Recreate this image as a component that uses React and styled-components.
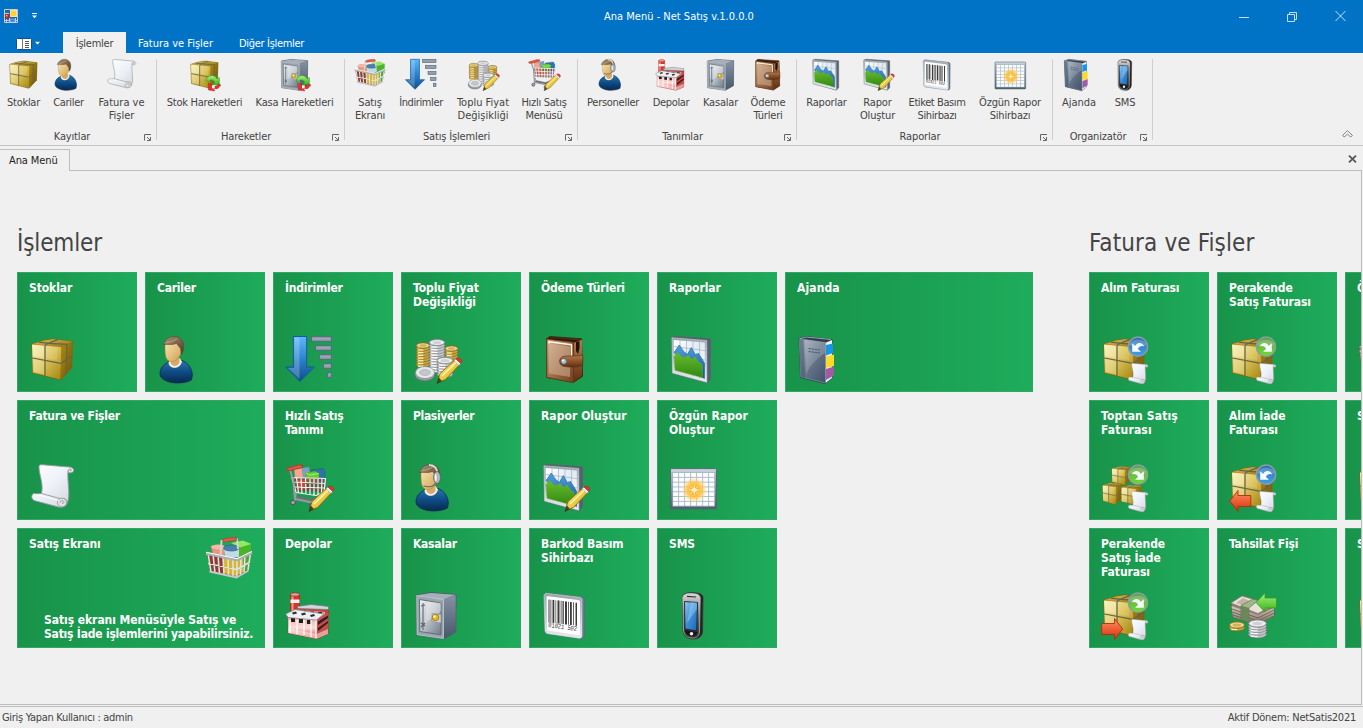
import React from 'react';
import styled, { createGlobalStyle, css } from 'styled-components';

const GlobalStyle = createGlobalStyle`
  * { box-sizing: border-box; }
  html, body { margin: 0; padding: 0; overflow: hidden; background: #f0f0f0; }
  body {
    font-family: Tahoma, "DejaVu Sans Condensed", "DejaVu Sans", sans-serif;
    font-stretch: condensed;
    font-size: 11px;
    color: #444;
  }
`;

/* ---------- gradients shared by the icons ---------- */

const Hidden = styled.svg`
  position: absolute;
  width: 0;
  height: 0;
`;

const Lin = ({ id, from, to, mid, v }) => (
  <linearGradient id={id} x1="0" y1="0" x2={v ? 0 : 1} y2="1">
    <stop offset="0" stopColor={from} />
    {mid && <stop offset=".5" stopColor={mid} />}
    <stop offset="1" stopColor={to} />
  </linearGradient>
);

const Defs = () => (
  <Hidden aria-hidden="true">
    <defs>
      <Lin id="boxFront" from="#f6edb4" mid="#d6be55" to="#a3850f" />
      <Lin id="boxSide" from="#b08d16" to="#6d5203" />
      <Lin id="boxTop" from="#dcc65c" to="#8d6c08" />
      <Lin id="skin" from="#fbe6b4" to="#cf9e4d" />
      <Lin id="hair" from="#a99579" mid="#80664a" to="#4d3822" />
      <Lin id="shirt" from="#2d75ae" mid="#0f4c84" to="#06294f" v />
      <Lin id="paper" from="#ffffff" mid="#edf1f7" to="#cdd0d6" />
      <Lin id="blueArrow" from="#5cb8fb" mid="#2b83ce" to="#0d4d8c" v />
      <Lin id="leather" from="#d5b292" mid="#a06f4b" to="#71401f" />
      <Lin id="strap" from="#b97a4c" to="#602f10" v />
      <Lin id="frame" from="#9aa4ae" to="#e8ebee" v />
      <Lin id="plot" from="#ffffff" mid="#e1eaf1" to="#ffffff" />
      <Lin id="green" from="#69bd2c" to="#2f8714" v />
      <Lin id="blue" from="#4ea3e6" to="#174f8f" v />
      <Lin id="steel" from="#f1f3f5" mid="#b9c0c8" to="#707a86" />
      <Lin id="steelSide" from="#8693a3" to="#49576a" v />
      <Lin id="slate" from="#a7b3c2" mid="#66768a" to="#40516a" />
      <Lin id="redBrick" from="#f8a6a0" mid="#fbdcd8" to="#d94b45" v />
      <Lin id="phoneBody" from="#d8d8d8" mid="#6f6f6f" to="#2b2b2b" v />
      <Lin id="screen" from="#93cbf5" mid="#3c8ed7" to="#1963b2" />
      <Lin id="redArrow" from="#ff9064" to="#d92f09" v />
      <Lin id="limeArrow" from="#aaf07c" to="#37b31c" v />
      <Lin id="badgeGreen" from="#5b9d4b" to="#6fe02d" v />
      <Lin id="badgeBlue" from="#2d6eb0" to="#3fa0ee" v />
      <Lin id="pencil" from="#fff08a" to="#d8a80e" />
      <Lin id="cash" from="#d3c8bc" to="#7c6c5d" v />
      <Lin id="gridFrame" from="#b8c6ce" to="#49606a" v />
      <radialGradient id="sun">
        <stop offset="0" stopColor="#fff6c2" />
        <stop offset=".2" stopColor="#ffb02a" />
        <stop offset=".6" stopColor="#ffc548" stopOpacity=".85" />
        <stop offset="1" stopColor="#ffe89a" stopOpacity="0" />
      </radialGradient>
    </defs>
  </Hidden>
);

/* ---------- icon parts, drawn on a 48 unit square ---------- */

const Box = () => (
  <g strokeLinejoin="round">
    <path d="M2.7 8 15 4.4 24 3 43.6 5.5 42.7 32 31.5 44 3.7 36.8Z" fill="#8a6c0c" stroke="#7d6414" strokeWidth=".8" />
    <path d="M2.9 8.2 15 4.5 24 3.2 43.4 5.6 32.5 11Z" fill="url(#boxTop)" />
    <path d="M3 8.4 32.5 11 31.4 43.6 3.9 36.5Z" fill="url(#boxFront)" />
    <path d="M32.5 11 43.4 5.8 42.5 31.8 31.4 43.6Z" fill="url(#boxSide)" />
    <path d="M3.5 9 15 10v12L4 20.5Z" fill="#fff9d0" opacity=".45" />
    <path d="M4.500 22.500 15 24.500V38L5 35.500Z" fill="#fff9d0" opacity=".25" />
    <path d="M17 10.500 29 11.500 28 24.500 17 22.500Z" fill="#fff3b0" opacity=".18" />
    <path d="M16 40V9.8Q16 8 29 3.6M10 6.2Q22 8 38 8.3L37.2 37.5M3.3 22 31.8 27.4 43 19.6" fill="none" stroke="#66624c" strokeWidth="1.2" />
  </g>
);

const Person = () => (
  <g>
    <path d="M3 38C3 31 8 27.500 12 26L25 24.500C31 26.500 35.300 33 35.300 39L34.500 44C28 47.500 17 47.800 11 45.500 6 44 3 41 3 38Z" fill="url(#shirt)" stroke="#062a50" strokeWidth=".8" />
    <path d="M11.500 26.500C12 33.500 23 34 25 25.500L22.500 22 14 23Z" fill="#f2f0ec" />
    <path d="M13.500 22h9v4.500C21 31 15.500 31 13.500 27Z" fill="#d9ab62" />
    <path d="M8 9C8 20 8.500 25 14.500 25.500 21.500 25 25 18 25 10L20 5 10 6Z" fill="url(#skin)" stroke="#ad7f3a" strokeWidth=".5" />
    <path d="M6.300 8.500C8 3.500 12 .5 17.500 .5 23 .8 27 4.500 26.700 10.500 26.500 15 25.500 17 24.300 18.500L23.500 12.500 19.500 7.500C15 9.500 10.500 8 6.300 8.500Z" fill="url(#hair)" stroke="#54402a" strokeWidth=".5" />
    <path d="M9 6.500C13 6.500 17 5 20 2.500" stroke="#c8b79c" strokeWidth="1" fill="none" opacity=".7" />
  </g>
);

const Agent = () => (
  <g>
    <Person />
    <path d="M16 .8C22 1 24.500 5 24.500 11" fill="none" stroke="#d9dde1" strokeWidth="1.800" />
    <ellipse cx="24" cy="13.500" rx="3.400" ry="6" fill="#b7bdc4" stroke="#555b62" strokeWidth=".8" />
    <ellipse cx="22.800" cy="13.500" rx="1.600" ry="4.300" fill="#eef0f2" stroke="#777" strokeWidth=".5" />
    <path d="M22.500 19C21 22.500 16 23.500 10.500 22" fill="none" stroke="#656a70" strokeWidth="1.200" />
  </g>
);

const Scroll = () => (
  <g stroke="#96979b" strokeWidth=".9" strokeLinejoin="round">
    <path d="M10 1.800C10.500 .8 12 .7 14 .8L40 3C45 3 46.500 8 42 8.800 40 9.200 39 8 39 7 38 18 42 32 38 39.500 37 42.500 33 44 29.500 43L5 36.500C2.500 35 2 31.500 4 30L12.500 29.500C15 20 9.500 10 10 1.800Z" fill="url(#paper)" />
    <path d="M39 7C39 4.800 42.500 4.300 42.500 6.300 42.300 7.300 41 7.200 41 6.500" fill="#d6d8dc" />
    <path d="M12.500 29.500 31 34.500C36 35.500 37.500 32.500 37.500 39.500" fill="none" />
    <ellipse cx="33" cy="38.500" rx="4.600" ry="4.300" fill="#e2e3e6" />
    <path d="M31 38.500C31 36 35 36 35 38.500 34.500 40 32.500 39.500 33 38.500" fill="none" />
    <path d="M4 30C8 30.500 18 33.500 30 36.500" fill="none" stroke="#fff" />
  </g>
);

const Discount = () => (
  <g>
    <path d="M8.300.5H21.700V31H29.300L15 45.500.7 31H8.300Z" fill="url(#blueArrow)" stroke="#155a9c" strokeWidth="1" />
    <path d="M9.200 1.400h5.300V43L3 31.900h6.200Z" fill="#fff" opacity=".22" />
    {[0, 1, 2, 3, 4].map((i) => (
      <g key={i}>
        <rect x={26.500 + i * 4} y={.4 + i * 9} width={20 - i * 4} height="5" fill="#8497a3" stroke="#5a6a78" strokeWidth=".9" />
        <path d={`M${27.500 + i * 4} ${2.900 + i * 9}H45.500`} stroke="#a9b5be" strokeWidth="1" />
      </g>
    ))}
  </g>
);

const Pencil = () => (
  <g strokeLinejoin="round">
    <path d="M24 47.500 26.300 40 29.800 44.500Z" fill="#4b3a20" stroke="#3c2e18" strokeWidth=".6" />
    <path d="M25.800 41.500 27 37.500 41.500 24.300 46.300 29 32.500 43.500 28.500 45Z" fill="url(#pencil)" stroke="#7f6108" strokeWidth=".8" />
    <path d="M41 24.800 43 23 47.800 27.500 45.900 29.500Z" fill="#f1f1f1" stroke="#888" strokeWidth=".5" />
    <path d="M43 23C44 21.500 46.500 22 48 23.500 49 25 49 26.500 47.600 27.500Z" fill="#e0352c" stroke="#952019" strokeWidth=".4" />
    <path d="M29 40 43 26.500" stroke="#fff6b5" strokeWidth="1.200" />
  </g>
);

const Stack = ({ x, y, rx, count, gold, step = 2.700 }) => (
  <g stroke={gold ? '#80651c' : '#6f7277'} strokeWidth=".6">
    {Array.from({ length: count }, (_, i) => {
      const cy = y + (count - 1 - i) * step;
      return (
        <g key={i}>
          <ellipse cx={x} cy={cy} rx={rx} ry={rx * .42} fill={gold ? '#c7a343' : '#c4c7ca'} />
          <path d={`M${x - rx * .75} ${cy + 1.800}h${rx * .8}`} stroke={gold ? '#fff1ae' : '#fff'} strokeWidth="1.300" />
        </g>
      );
    })}
    <ellipse cx={x} cy={y} rx={rx - .3} ry={rx * .38} fill={gold ? '#edd993' : '#eceeef'} />
    <ellipse cx={x} cy={y} rx={rx * .55} ry={rx * .2} fill={gold ? '#d0b25a' : '#cfd1d4'} stroke="none" />
  </g>
);

const Coins = () => (
  <g>
    <Stack x={10} y={9.500} rx={6.800} count={8} gold />
    <Stack x={38.500} y={12.500} rx={6.500} count={6} gold />
    <Stack x={24} y={6.500} rx={7.800} count={11} />
    <Stack x={32} y={24.500} rx={8} count={6} />
    <ellipse cx="11.800" cy="38.500" rx="10" ry="6.500" fill="#989ba0" stroke="#686b70" strokeWidth=".8" />
    <ellipse cx="12" cy="36.500" rx="9.500" ry="6" fill="#e6e8ea" stroke="#85888d" strokeWidth=".7" />
    <ellipse cx="12" cy="36.500" rx="5.500" ry="3" fill="#c3c7cb" stroke="#9b9ea2" strokeWidth=".5" />
    <Pencil />
  </g>
);

const Wallet = () => (
  <g strokeLinejoin="round">
    <path d="M5.700 2.500 9 .5 40.500 2.800 41.500 40.500 32 46.500 5.700 41.500Z" fill="#512b14" stroke="#3b1c0a" strokeWidth=".8" />
    <path d="M8 2 38 4.500 36 6 8 3Z" fill="#2b160c" />
    <path d="M33 7 37 5 41 4 41 40 32.500 46Z" fill="url(#strap)" />
    <path d="M35 6V15L37 18 38.500 12V5Z" fill="#1f120b" />
    <path d="M5.900 3.300 32 6.500V46.300L5.900 41.300Z" fill="url(#leather)" stroke="#754522" strokeWidth=".8" />
    <path d="M8 7.500 29 10.500V41L8 37.500Z" fill="#d8b99d" opacity=".5" />
    <path d="M8 7.500V5.800L30.500 8.700V23" fill="none" stroke="#fff6ea" strokeWidth="1.500" />
    <path d="M22 20.500C25 19.500 39 20.500 41.800 19V29C39 31.500 27 31.500 22 30 17.500 28.500 17.500 22 22 20.500Z" fill="url(#strap)" stroke="#5e3114" strokeWidth=".7" />
    <circle cx="22.800" cy="25.300" r="2.900" fill="#a9bfce" stroke="#4d5d68" strokeWidth=".7" />
    <circle cx="22" cy="24.500" r="1" fill="#fff" />
  </g>
);

const Report = () => (
  <g strokeLinejoin="round">
    <path d="M2.700 1.500 6 .4 41.500 2.800V43L38 46.800 3.300 37.200Z" fill="#536170" stroke="#58636e" strokeWidth=".8" />
    <path d="M2.900 1.700 37.800 4.500V46.300L3.500 37Z" fill="url(#frame)" stroke="#d8dde1" strokeWidth=".5" />
    <path d="M4.700 4 35.800 6.500V43L5.200 34.800Z" fill="url(#plot)" />
    <path d="M11 4.500V36M17.500 5V38M24 5.500V40M30.500 6V42M5 10.500 36 14.500M5 18.500 36 24M5 27 36 34" stroke="#9eb2c1" strokeWidth=".7" />
    <path d="M5 16.500 10.300 9 14.300 15 18.300 18.500 22.300 11.500 26.300 18.500 29.500 17.500 35.500 27V42.500L30 40Z" fill="url(#blue)" stroke="#1b5a9f" strokeWidth=".6" />
    <path d="M5 20.500 8.700 16.300 12.700 20.700 16 21.500 19.300 19.500 22.700 23.500 26 21 30 26.500 33 28.500 33.700 41.800 6 34.300Z" fill="url(#green)" stroke="#62ad30" strokeWidth=".6" />
  </g>
);

const ReportEdit = () => (
  <g>
    <Report />
    <Pencil />
  </g>
);

const GridSun = () => (
  <g>
    <rect x="1.500" y="4.600" width="46" height="40.300" rx="1" fill="url(#gridFrame)" stroke="#4f6671" strokeWidth=".9" />
    <rect x="2.500" y="5.300" width="44" height="2.600" fill="#c6d1d7" />
    <rect x="3.500" y="8.500" width="42.300" height="34" fill="#a9b7c5" />
    {Array.from({ length: 49 }, (_, i) => (
      <rect key={i} x={4.100 + (i % 7) * 6} y={9 + Math.floor(i / 7) * 4.800} width="5.100" height="3.900" fill="#fbfdff" />
    ))}
    <circle cx="25.300" cy="26" r="13" fill="url(#sun)" />
    <path d="M25.300 20.500 26.200 25.100 30.800 26 26.200 26.900 25.300 31.500 24.400 26.900 19.800 26 24.400 25.100Z" fill="#fffbe0" />
    <path d="M21.500 22.200 29.100 29.800M29.100 22.200 21.500 29.800" stroke="#fff1b5" strokeWidth=".8" />
  </g>
);

const Cart = () => (
  <g strokeLinejoin="round">
    <path d="M9 5 17 4 19 15H10Z" fill="#f1a68f" stroke="#c96c54" strokeWidth=".5" />
    <path d="M17 4 24 3 26 14H18Z" fill="#7c9fc0" />
    <path d="M26 6 38 4.500 40 8V20H27Z" fill="#2a73ae" stroke="#1b5587" strokeWidth=".5" />
    <path d="M21 9 30 7 34 9.500V18H21Z" fill="#66cc35" stroke="#3c9a18" strokeWidth=".5" />
    <path d="M21 9 25 11 34 9.500" stroke="#a5ee77" fill="none" />
    <path d="M7 13 40 14.500 39.500 28 11 27Z" fill="#803d38" opacity=".72" />
    <path d="M13 16H21V25H13Z" fill="#c54a35" />
    <path d="M7 13.500 40.500 14.500 39 28.500 31 31.500 11 28.500ZM7.500 18 39.800 19.500M8.500 23 39.500 24M11.500 13.500 13.500 29M16 13.500 17 29.500M20.500 14 21 30M25 14 25 30.500M29 14 29 31M33 14 33 30.500M37 14.500 36.500 29" fill="none" stroke="#f1f2f3" strokeWidth="1.250" />
    <path d="M12 32 26 35 36 31V34L26 38 10 34.500Z" fill="#6b7077" />
    <path d="M7 13 5 5M8 13 10 37M11 28.500 10 35 27 38.500 37 34" fill="none" stroke="#979ba1" strokeWidth="1.900" />
    <path d="M1 4.500 14 .8 18 1.500 17 3.500 5 6.500 1.500 6.300Z" fill="#e75543" stroke="#a92c21" strokeWidth=".7" />
    <circle cx="8" cy="38.500" r="2.300" fill="#9ca1a6" stroke="#4e5257" />
    <circle cx="26.500" cy="42" r="2.300" fill="#9ca1a6" stroke="#4e5257" />
    <Pencil />
  </g>
);

const Basket = () => (
  <g strokeLinejoin="round">
    <path d="M6 10C8 7.500 17 7.500 20 10L19 22 8 18Z" fill="#e9967c" stroke="#b9624b" strokeWidth=".5" />
    <ellipse cx="13" cy="10" rx="7" ry="2.400" fill="#f3b9a4" />
    <path d="M27 6 38 4 46 7.500V21L32 25Z" fill="#48b628" />
    <path d="M26 6 38 3.600 46.500 7 35 10.500Z" fill="#94e764" />
    <path d="M19 11C20 7.500 32 7.500 34 11V20L20 21Z" fill="#c3d9e7" />
    <path d="M18.500 11C19 7 33 7 34 11 34 15 19 15 18.500 11Z" fill="#4681ad" stroke="#295b80" strokeWidth=".6" />
    <path d="M2 16 32 23 46.500 15.500 43 33 31.500 40 5 34Z" fill="#8e3b2e" />
    <path d="M18 20 32 23 40 19V34L31 39 18 36Z" fill="#d5b72e" />
    <path d="M38 20 46 16 43 32 38 35Z" fill="#4da833" />
    <path d="M3 26.500 32 32.500 45 25M3 16 6 35M8 17 10 36M13 18 14.500 37M18 19.500 19 38M23 20.500 23.500 39M28 21.500 28 40M32 22 31.800 40.500M36 20 35.500 38M40 18.500 39 35.500M45.500 16 43 33" fill="none" stroke="#dfe1e4" strokeWidth="1.600" />
    <path d="M4.500 34.500 31.500 40.500 43.500 33.500" fill="none" stroke="#c3c6ca" strokeWidth="2" />
    <path d="M1 16.300 32 22.800 47 15.500" fill="none" stroke="#a9adb2" strokeWidth="3" />
    <path d="M1 15.300 32 21.700 47 14.400" fill="none" stroke="#fff" strokeWidth="1" />
    <path d="M15.500 19 16.500 4 32 2 33 12" fill="none" stroke="#d4d7da" strokeWidth="1.900" />
    <path d="M17.500 2.500C21 1 28 .2 31.500 .8L31.800 3.200 18 5Z" fill="#e45b43" stroke="#a83221" strokeWidth=".6" />
  </g>
);

const Factory = () => (
  <g strokeLinejoin="round">
    <path d="M5.500 2.500V20.500H14.500V2.500Z" fill="#d5372f" stroke="#952019" strokeWidth=".6" />
    <path d="M6.500 3V20H8.500V3Z" fill="#ff938a" />
    <rect x="5.500" y="7.500" width="9" height="3.500" fill="#f4f1f0" />
    <ellipse cx="10" cy="2.500" rx="4.500" ry="1.800" fill="#e99a94" stroke="#902019" strokeWidth=".6" />
    <path d="M12 15 43.500 18 43 42 31.500 47 3 41 3.500 25Z" fill="#c5433d" stroke="#8d2822" strokeWidth=".5" />
    <path d="M12 14.500 26 12.500 43.500 14.500 43.500 17.500 13 16.500Z" fill="#d1d6dc" stroke="#747a81" strokeWidth=".7" />
    <path d="M14 18 40 20V26H14Z" fill="#eaa19b" />
    <path d="M17 18.500h4v3h-4ZM25 19.500h4v3h-4ZM33 20h4v3h-4Z" fill="#28282b" />
    <path d="M3 25 32 27.500 31.500 46.500 3.300 41Z" fill="url(#redBrick)" />
    <path d="M32 27 43.500 20 43 42 31.500 46.500Z" fill="#cd4944" />
    <path d="M33 29.500 43 23.500V26L33 33ZM33 36 43 29V31L33 39Z" fill="#292125" />
    <path d="M6 26h4v4h-4ZM14 27h4v4h-4ZM22 28h4v4h-4Z" fill="#1d1d20" />
    <path d="M5 28V41M12 28V42M19 28V43M26 28V45M31 28V46" stroke="#fff" strokeWidth="1.300" />
    <path d="M.8 22 10 17.500 39 22 31.500 28 3 25.500Z" fill="#eef0f2" stroke="#83888e" strokeWidth=".8" />
    <path d="M7 20.500 11 19.500 12 21.500 8 22.500ZM16 21.500 20 20.500 21 22.500 17 23.500ZM25 23 29 22 30 24 26 25Z" fill="#2d3034" />
    <path d="M3 36.500 31.500 42 43 37V42L31.500 47 3 41Z" fill="#fff" opacity=".48" />
  </g>
);

const Safe = () => (
  <g strokeLinejoin="round">
    <path d="M3.500 3 18 .6 43 2.500 42.700 40 30.500 47 3.800 43Z" fill="#596675" stroke="#4c5866" strokeWidth=".9" />
    <path d="M3.700 3.200 18 .9 42.500 2.700 30.500 7.500Z" fill="#a5afba" />
    <path d="M30.500 7.500 42.700 3V39.800L30.500 46.700Z" fill="url(#steelSide)" />
    <path d="M3.700 3.500 30.500 7.500V46.600L4 42.700Z" fill="#9ba5b0" stroke="#dbe0e4" strokeWidth=".6" />
    <path d="M6.500 7.500 28 11V42.800L6.800 39.500Z" fill="url(#steel)" stroke="#5b6671" strokeWidth=".9" />
    <path d="M14 9.500 28 11V19L12 31Z" fill="#fff" opacity=".3" />
    <path d="M10 11V38M8 14 12 13M8 31 12 34M8 35 12 31" stroke="#5c6670" strokeWidth="1.100" fill="none" />
    <path d="M19 21.500 28 22.500V31L19 29.500Z" fill="#cbd0d5" stroke="#78818a" strokeWidth=".5" />
    <circle cx="22.500" cy="25.500" r="3.300" fill="#e4b722" stroke="#90660a" strokeWidth=".7" />
    <circle cx="21.500" cy="24.500" r="1.300" fill="#fff6bd" />
  </g>
);

const Barcode = () => (
  <g strokeLinejoin="round">
    <path d="M3.500 4C3.500 2 5 1 7 1.300L41 5C43 5.500 43.700 6.500 43.700 8L43.500 43C43.500 45.500 42 47 39.500 46.500L7 42C5 41.500 4 40.500 4 38.500Z" fill="#687a8a" stroke="#576978" strokeWidth=".7" />
    <path d="M3 4C3 2 4.500 1.200 6 1.400L38.500 5.200C40.500 5.500 41 6.500 41 8V43C41 45.500 40 46.500 38 46.200L7 41.700C5 41.400 4 40 4 38.500Z" fill="url(#frame)" stroke="#dee4e9" strokeWidth=".5" />
    <path d="M5.500 6C5.500 4.500 6 4.200 7 4.300L37 8C38.500 8.200 39 9 39 10V41C39 42.500 38 43.500 36.500 43L8 38.800C6.500 38.500 6 37.500 6 36.500Z" fill="#fff" />
    <g fill="#3c3c3c">
      {[[7.500, 1], [9.500, .8], [11.500, 1.800], [14.500, .7], [16.500, 2], [19.700, .8], [21.500, 1.300], [24, 2], [27, .8], [29, 1.800], [32, .8], [34.500, 1.500]].map(([x, w]) => (
        <path key={x} d={`M${x} ${6.500 + x * .12}h${w}v23h-${w}Z`} />
      ))}
    </g>
    <text x="7" y="35" transform="rotate(8 7 35)" textLength="29" lengthAdjust="spacingAndGlyphs" fontFamily="Liberation Mono, monospace" fontSize="7" fill="#333">01021 502</text>
  </g>
);

const Phone = () => (
  <g strokeLinejoin="round">
    <path d="M13.500 5C14 1.500 18 .7 23 .8 28 .7 33.500 1.500 34 5L33.500 40C33 45 28 47.300 24 47 18 46.500 14 44 14 38Z" fill="#232323" stroke="#333" strokeWidth=".8" />
    <path d="M13.800 5C15 1.500 19 1.200 25 1.700 30 2 31.500 4 31.200 7L30.500 40C30 45 26 46.800 22 45.800 17 45 14.800 42.500 14.500 38Z" fill="url(#phoneBody)" stroke="#d9d9d9" strokeWidth=".6" />
    <path d="M18 4.300 27 5" stroke="#333" strokeWidth="1.200" />
    <path d="M15.500 9.500 28.500 10.500 27.800 39 16 37Z" fill="url(#screen)" stroke="#111" strokeWidth=".8" />
    <path d="M22 10 28 10.500V17L18 31Z" fill="#bfe3ff" opacity=".35" />
    <path d="M15.500 38 28.500 40C28 45 18 46.500 15.500 38Z" fill="#151515" />
    <circle cx="22.500" cy="41.700" r="1.800" fill="#ededed" />
  </g>
);

const Agenda = () => (
  <g strokeLinejoin="round">
    <path d="M2 2.500 9 .5 35 3.500V42L28 47.500 3.500 41.500Z" fill="#2f3d4f" stroke="#243142" strokeWidth=".7" />
    <path d="M28 7 35 4V42L28.500 47Z" fill="#eef1f4" />
    <path d="M29 9 36 7.500V17L29 19.500Z" fill="#1596e8" />
    <path d="M29 20.500 37 18.500V30L29 32Z" fill="#ffd928" />
    <path d="M29 33 37 30.500V39.500L29 44Z" fill="#a35aa6" />
    <path d="M2.300 2.800 28.500 6.500V47L3.800 41Z" fill="url(#slate)" stroke="#8794a5" strokeWidth=".7" />
    <path d="M2.300 2.800 6.500 3.500 8 42 3.800 41Z" fill="#4a5b70" opacity=".6" />
    <path d="M8 3.500 28 6.500V17C20 22 12 30 9 39Z" fill="#fff" opacity=".18" />
    <path d="M11.500 12.500 23 14M11.500 15.500 23 17" stroke="#4a596c" strokeWidth="1" strokeDasharray="2.400 .7" />
    <path d="M3 2.700 9 1 34 3.500" fill="none" stroke="#b6c0cc" strokeWidth=".8" />
  </g>
);

const Exchange = () => (
  <g strokeLinejoin="round">
    <path d="M26 33C25 25 38 21 42 29.500L45.500 28V38.500H35L38.500 34.500C36 31 31 30 30 34Z" fill="url(#limeArrow)" stroke="#268d16" strokeWidth=".8" />
    <path d="M29 36V46.500L39 48 36.500 44.500H43L48 39 44 37.500 41 40.500H34.500L33 37Z" fill="#dc332b" stroke="#a4201b" strokeWidth=".6" />
    <path d="M34.500 39.500h4v4.500h-4Z" fill="#fff" />
  </g>
);

const StockMoves = () => (<g><Box /><Exchange /></g>);
const SafeMoves = () => (<g><Safe /><Exchange /></g>);

const Badge = ({ out }) => (
  <g>
    <circle cx="37" cy="10.700" r="9.600" fill={out ? 'url(#badgeGreen)' : 'url(#badgeBlue)'} stroke="#8d9ba3" strokeWidth="1.500" />
    <path d="M28.500 9C30 2 44 2 45.500 9 41 11 33 11 28.500 9Z" fill="#fff" opacity=".2" />
    <g transform={out ? undefined : 'translate(74 0) scale(-1 1)'}>
      <path d="M30.800 10.500C32.500 6 38 5.800 39.800 10L42.800 7.300V15.800H34L37 12.900C35.800 10 33.500 9.500 30.800 10.500Z" fill="#f7fbfd" />
    </g>
  </g>
);

const MiniScroll = () => (
  <g transform="translate(26 27) scale(.47 .48)"><Scroll /></g>
);

const Purchase = () => (<g><Box /><Badge /><MiniScroll /></g>);
const Retail = () => (<g><Box /><Badge out /><MiniScroll /></g>);
const Boxes = () => (
  <g>
    <g transform="translate(9.500 1) scale(.46)"><Box /></g>
    <g transform="translate(18.500 19.500) scale(.52 .49)"><Box /></g>
    <g transform="translate(.3 17) scale(.46 .54)"><Box /></g>
  </g>
);
const Wholesale = () => (<g><Boxes /><Badge out /><MiniScroll /></g>);
const RedArrow = ({ flip }) => (
  <path
    transform={flip ? 'translate(22.500 0) scale(-1 1)' : undefined}
    d="M.8 37 9 26.500V31.500H21.800V42.500H9V47.500Z"
    fill="url(#redArrow)" stroke="#b22c0c" strokeWidth=".9" strokeLinejoin="round"
  />
);
const PurchaseReturn = () => (<g><Purchase /><RedArrow /></g>);
const RetailReturn = () => (<g><Retail /><RedArrow flip /></g>);

const Notes = () => (
  <g strokeLinejoin="round">
    <path d="M2 11 13 4 44 15 45.500 23 29 33 4 25Z" fill="#8c7d6f" stroke="#62564a" strokeWidth=".8" />
    <path d="M2.500 14 29 23 45 15.500V24L29 33 4 25Z" fill="url(#cash)" />
    <path d="M3 17 29 26 45 18M3.500 20 29 29 45 21M4 23 29 31.500 45 24" stroke="#66584b" strokeWidth=".8" fill="none" />
    <path d="M2 11 13 4 44 13 29 21.500Z" fill="#e9e2da" stroke="#8a7d70" strokeWidth=".7" />
    <path d="M7 11 14 6 21 9 14 13.500Z" fill="#c4b2a5" />
    <path d="M12 13.500 24 7 29 8.500 20 16V30L12 27Z" fill="#a3b58c" stroke="#4f6f45" strokeWidth=".6" />
    <path d="M12 13.500 20 16V30L12 27Z" fill="#6c875c" />
  </g>
);
const Collection = () => (
  <g>
    <Notes />
    <path d="M27 10.500 36 1V6H47.500V16H36V20Z" fill="url(#limeArrow)" stroke="#2b9f1b" strokeWidth=".8" strokeLinejoin="round" />
    <Stack x={8} y={33} rx={7.700} count={2} gold />
    <Stack x={28.500} y={31.500} rx={9} count={5} />
  </g>
);

const SVG = styled.svg`
  display: block;
  flex: none;
  width: ${(p) => p.$size}px;
  height: ${(p) => p.$size}px;
  overflow: visible;
`;

const Icon = ({ of: Drawing, size }) => (
  <SVG $size={size} viewBox="0 0 48 48"><Drawing /></SVG>
);

/* ---------- window ---------- */

const Window = styled.div`
  display: flex;
  flex-direction: column;
  width: 1363px;
  height: 728px;
  overflow: hidden;
  background: #f0f0f0;
`;

const Header = styled.header`
  flex: none;
  height: 53px;
  background: #0173c7;
  color: #fff;
`;

const TitleBar = styled.div`
  display: grid;
  grid-template-columns: 220px 1fr 220px;
  align-items: center;
  height: 32px;
`;

const QuickAccess = styled.div`
  display: flex;
  align-items: center;
  gap: 13px;
  padding-left: 4px;
`;

const Title = styled.h1`
  margin: 0;
  padding-right: 5px;
  text-align: center;
  font-size: 11px;
  font-weight: normal;
  line-height: 13px;
`;

const WindowButtons = styled.div`
  display: flex;
  justify-content: flex-end;
  gap: 37px;
  padding-right: 17px;
`;

const TabBar = styled.nav`
  display: flex;
  align-items: stretch;
  height: 21px;
`;

const FileButton = styled.div`
  display: flex;
  align-items: center;
  gap: 2px;
  width: 63px;
  padding: 2px 0 0 16px;
`;

const RibbonTab = styled.div`
  width: ${(p) => p.$width}px;
  padding-top: 5px;
  text-align: center;
  line-height: 14px;
  white-space: nowrap;
  letter-spacing: ${(p) => p.$track || 0}px;
  ${(p) => p.$active && css`background: #f0f0f0; color: #444;`}
`;

const Ribbon = styled.section`
  display: flex;
  flex: none;
  height: 93px;
  border-bottom: 1px solid #c3c3c3;
`;

const Group = styled.div`
  display: flex;
  flex-direction: column;
  width: ${(p) => p.$width}px;
  height: 81px;
  margin-top: 6px;
  border-right: 1px solid #cfcfcf;
`;

const GroupButtons = styled.div`
  display: flex;
  flex: none;
  height: 70px;
  padding-left: ${(p) => p.$pad}px;
`;

const Command = styled.button`
  display: flex;
  flex-direction: column;
  align-items: center;
  gap: 5px;
  flex: none;
  width: ${(p) => p.$width}px;
  padding: 0;
  border: 0;
  background: none;
  color: inherit;
  font: inherit;
`;

const CommandLabel = styled.span`
  line-height: 13px;
  text-align: center;
  white-space: pre;
  letter-spacing: ${(p) => p.$track}px;
`;

const GroupFooter = styled.div`
  display: flex;
  flex: none;
  align-items: center;
  height: 15px;
  padding-right: 5px;
`;

const Caption = styled.span`
  flex: 1;
  padding-left: ${(p) => p.$pad}px;
  text-align: center;
  line-height: 13px;
  letter-spacing: -0.15px;
`;

const Launcher = styled.svg`
  width: 7px;
  height: 7px;
  margin-top: 1px;
`;

const RibbonEnd = styled.div`
  display: flex;
  flex: 1;
  align-items: flex-end;
  justify-content: flex-end;
  padding: 0 10px 6px 0;
`;

const DocBar = styled.div`
  display: flex;
  flex: none;
  height: 25px;
  padding-top: 3px;
`;

const DocTab = styled.div`
  width: 70px;
  height: 22px;
  padding: 4px 0 0 9px;
  border: 1px solid #bdbdbd;
  border-width: 1px 1px 0 0;
  line-height: 13px;
  letter-spacing: -0.1px;
  color: #222;
`;

const DocRest = styled.div`
  display: flex;
  flex: 1;
  justify-content: flex-end;
  padding: 6px 5px 0 0;
  margin-right: 1px;
  border-bottom: 1px solid #bdbdbd;
`;

const Workspace = styled.main`
  display: flex;
  flex: none;
  gap: 56px;
  width: 1362px;
  height: 534px;
  padding: 54px 0 0 17px;
  overflow: hidden;
  border: 1px solid #bdbdbd;
  border-width: 0 1px 1px 0;
`;

const TileGroup = styled.section`
  flex: none;
  width: ${(p) => p.$width}px;
`;

const GroupTitle = styled.h2`
  height: 47px;
  margin: 0;
  padding-top: 1px;
  font-size: 24px;
  font-weight: normal;
  line-height: 34px;
  white-space: nowrap;
  letter-spacing: ${(p) => p.$track || 0}px;
`;

const TileRow = styled.div`
  display: flex;
  gap: 8px;
  margin-bottom: 8px;
`;

const Tile = styled.article`
  display: flex;
  flex: none;
  flex-direction: ${(p) => (p.$split ? 'row' : 'column')};
  flex-wrap: ${(p) => (p.$split ? 'wrap' : 'nowrap')};
  justify-content: space-between;
  width: ${(p) => (p.$wide ? 248 : 120)}px;
  height: 120px;
  padding: ${(p) => (p.$split ? '8px 11px 6px' : '8px 11px 7px')};
  border: 1px solid #2ea862;
  background: linear-gradient(90deg, #18934a, #1eac5b);
  color: #fff;
`;

const TileText = styled.p`
  margin: 0;
  font-size: 12px;
  font-weight: bold;
  line-height: 14px;
  white-space: pre;
  letter-spacing: ${(p) => p.$track}px;
`;

const TileNote = styled.div`
  align-self: flex-end;
  padding-left: 15px;
`;

const StatusBar = styled.footer`
  display: flex;
  flex: none;
  justify-content: space-between;
  height: 22px;
  margin-top: 1px;
  padding: 4px 7px 0 2px;
  border-top: 1px solid #bdbdbd;
  line-height: 13px;
`;

const StatusText = styled.span`
  letter-spacing: ${(p) => p.$track}px;
`;

const Glyph = styled.svg`
  display: block;
  flex: none;
`;

/* ---------- content ---------- */

const groups = [
  { name: 'Kayıtlar', width: 157, pad: 1, cap: 0, items: [['Stoklar', Box, 45, -0.28], ['Cariler', Person, 45, -0.28], ['Fatura ve\nFişler', Scroll, 61, 0]] },
  { name: 'Hareketler', width: 188, pad: 4, cap: 3, items: [['Stok Hareketleri', StockMoves, 87, -0.25], ['Kasa Hareketleri', SafeMoves, 93, -0.2]] },
  { name: 'Satış İşlemleri', width: 233, pad: 4, cap: 3, items: [['Satış\nEkranı', Basket, 42, -0.15], ['İndirimler', Discount, 60, -0.4], ['Toplu Fiyat\nDeğişikliği', Coins, 64, 0], ['Hızlı Satış\nMenüsü', Cart, 58, -0.28]] },
  { name: 'Tanımlar', width: 219, pad: 4, cap: 3, items: [['Personeller', Agent, 62, -0.27], ['Depolar', Factory, 54, -0.35], ['Kasalar', Safe, 45, -0.2], ['Ödeme\nTürleri', Wallet, 50, -0.2]] },
  { name: 'Raporlar', width: 256, pad: 4, cap: 3, items: [['Raporlar', Report, 51, -0.2], ['Rapor\nOluştur', ReportEdit, 51, -0.15], ['Etiket Basım\nSihirbazı', Barcode, 68, -0.4], ['Özgün Rapor\nSihirbazı', GridSun, 78, -0.2]] },
  { name: 'Organizatör', width: 100, pad: 3, cap: 3, items: [['Ajanda', Agenda, 46, 0], ['SMS', Phone, 46, -0.2]] },
];

const salesRows = [
  [{ label: 'Stoklar', icon: Box }, { label: 'Cariler', icon: Person, track: -0.25 }, { label: 'İndirimler', icon: Discount, track: -0.2 }, { label: 'Toplu Fiyat\nDeğişikliği', icon: Coins }, { label: 'Ödeme Türleri', icon: Wallet, track: -0.15 }, { label: 'Raporlar', icon: Report }, { label: 'Ajanda', icon: Agenda, wide: true, track: 0.1 }],
  [{ label: 'Fatura ve Fişler', icon: Scroll, wide: true, track: -0.27 }, { label: 'Hızlı Satış\nTanımı', icon: Cart, track: -0.18 }, { label: 'Plasiyerler', icon: Agent, track: -0.35 }, { label: 'Rapor Oluştur', icon: ReportEdit, track: 0.05 }, { label: 'Özgün Rapor\nOluştur', icon: GridSun, track: 0.05 }],
  [{ label: 'Satış Ekranı', icon: Basket, wide: true, note: [['Satış ekranı Menüsüyle Satış ve', -0.06], ['Satış İade işlemlerini yapabilirsiniz.', -0.21]] }, { label: 'Depolar', icon: Factory, track: -0.15 }, { label: 'Kasalar', icon: Safe, track: -0.28 }, { label: 'Barkod Basım\nSihirbazı', icon: Barcode }, { label: 'SMS', icon: Phone }],
];

const invoiceRows = [
  [{ label: 'Alım Faturası', icon: Purchase, track: -0.15 }, { label: 'Perakende\nSatış Faturası', icon: Retail, track: -0.13 }, { label: 'Ö', icon: Notes }],
  [{ label: 'Toptan Satış\nFaturası', icon: Wholesale, track: 0.15 }, { label: 'Alım İade\nFaturası', icon: PurchaseReturn }, { label: 'S', icon: Box }],
  [{ label: 'Perakende\nSatış İade\nFaturası', icon: RetailReturn }, { label: 'Tahsilat Fişi', icon: Collection, track: -0.22 }, { label: 'S', icon: Box }],
];

const TileGrid = ({ rows }) => rows.map((row, r) => (
  <TileRow key={r}>
    {row.map(({ label, icon, wide, note, track = -0.08 }, i) => (
      <Tile key={i} $wide={wide} $split={Boolean(note)}>
        <TileText $track={track}>{label}</TileText>
        <Icon of={icon} size={48} />
        {note && (
          <TileNote>
            {note.map(([line, t]) => <TileText key={line} $track={t}>{line}</TileText>)}
          </TileNote>
        )}
      </Tile>
    ))}
  </TileRow>
));

export default function App() {
  return (
    <Window>
      <GlobalStyle />
      <Defs />
      <Header>
        <TitleBar>
          <QuickAccess>
            <Glyph width="14" height="14" viewBox="0 0 14 14">
              <path d="M.5.5h13v13H.5Z" fill="#1c67a5" stroke="#c5cdd4" />
              <path d="M0 4.500h5M5.500 9v5M0 11.500h14M11.500 9v5M2.500 10v4" stroke="#c5cdd4" />
              <rect x="6.500" y="1.500" width="6" height="6" fill="#ffcf3e" stroke="#f7e29a" />
              <rect x="1" y="5" width="4" height="4.500" fill="#c81d1d" />
              <rect x="2" y="6" width="1.500" height="1.500" fill="#ffaaa0" />
              <rect x="6" y="10" width="5" height="3" fill="#3b82e8" stroke="#a4c8f5" strokeWidth=".6" />
            </Glyph>
            <Glyph width="7" height="6" viewBox="0 0 7 6">
              <path d="M1 0h5v1H1ZM1 2.500h5L3.500 5.300Z" fill="#fff" />
            </Glyph>
          </QuickAccess>
          <Title>Ana Menü - Net Satış v.1.0.0.0</Title>
          <WindowButtons>
            <Glyph width="11" height="12" viewBox="0 0 11 12"><path d="M0 7.500h10" stroke="#c8dff1" /></Glyph>
            <Glyph width="11" height="12" viewBox="0 0 11 12">
              <path d="M.5 4.500h7v7h-7ZM2.500 4V2.500h7v7H8" fill="none" stroke="#c8dff1" />
            </Glyph>
            <Glyph width="11" height="12" viewBox="0 0 11 12"><path d="M.5 1 10.500 11M10.500 1 .5 11" stroke="#c8dff1" /></Glyph>
          </WindowButtons>
        </TitleBar>
        <TabBar>
          <FileButton>
            <Glyph width="16" height="12" viewBox="0 0 16 12">
              <rect x=".5" y=".5" width="15" height="11" rx="1" fill="#fff" stroke="#124f84" />
              <path d="M6 1h1v10H6Z" fill="#777" />
              <path d="M9 3.500h4M9 5.500h4M9 7.500h4M9 9.500h4" stroke="#555" />
            </Glyph>
            <Glyph width="7" height="5" viewBox="0 0 7 5"><path d="M.5.5h6L3.500 4Z" fill="#fff" stroke="#124f84" strokeWidth=".5" /></Glyph>
          </FileButton>
          <RibbonTab $width={63} $track={-0.25} $active>İşlemler</RibbonTab>
          <RibbonTab $width={99}>Fatura ve Fişler</RibbonTab>
          <RibbonTab $width={93} $track={-0.3}>Diğer İşlemler</RibbonTab>
        </TabBar>
      </Header>

      <Ribbon>
        {groups.map((g) => (
          <Group key={g.name} $width={g.width}>
            <GroupButtons $pad={g.pad}>
              {g.items.map(([label, icon, width, track]) => (
                <Command key={label} $width={width}>
                  <Icon of={icon} size={32} />
                  <CommandLabel $track={track}>{label}</CommandLabel>
                </Command>
              ))}
            </GroupButtons>
            <GroupFooter>
              <Caption $pad={g.cap}>{g.name}</Caption>
              <Launcher viewBox="0 0 7 7">
                <path d="M.5 6.500V.5H7M3 3 6 6M6.500 3v3.500H3" fill="none" stroke="#666" />
              </Launcher>
            </GroupFooter>
          </Group>
        ))}
        <RibbonEnd>
          <Glyph width="11" height="9" viewBox="0 0 11 9">
            <path d="M.7 5.300 5.500.8 10.300 5.300 8.700 7 5.500 4 2.300 7Z" fill="#fff" stroke="#666" strokeWidth=".9" />
          </Glyph>
        </RibbonEnd>
      </Ribbon>

      <DocBar>
        <DocTab>Ana Menü</DocTab>
        <DocRest>
          <Glyph width="9" height="8" viewBox="0 0 9 8"><path d="M1 .7 8 7.300M8 .7 1 7.300" stroke="#555" strokeWidth="1.800" /></Glyph>
        </DocRest>
      </DocBar>

      <Workspace>
        <TileGroup $width={1016}>
          <GroupTitle $track={-0.15}>İşlemler</GroupTitle>
          <TileGrid rows={salesRows} />
        </TileGroup>
        <TileGroup $width={376}>
          <GroupTitle $track={0.12}>Fatura ve Fişler</GroupTitle>
          <TileGrid rows={invoiceRows} />
        </TileGroup>
      </Workspace>

      <StatusBar>
        <StatusText $track={-0.3}>Giriş Yapan Kullanıcı : admin</StatusText>
        <StatusText $track={-0.25}>Aktif Dönem: NetSatis2021</StatusText>
      </StatusBar>
    </Window>
  );
}
